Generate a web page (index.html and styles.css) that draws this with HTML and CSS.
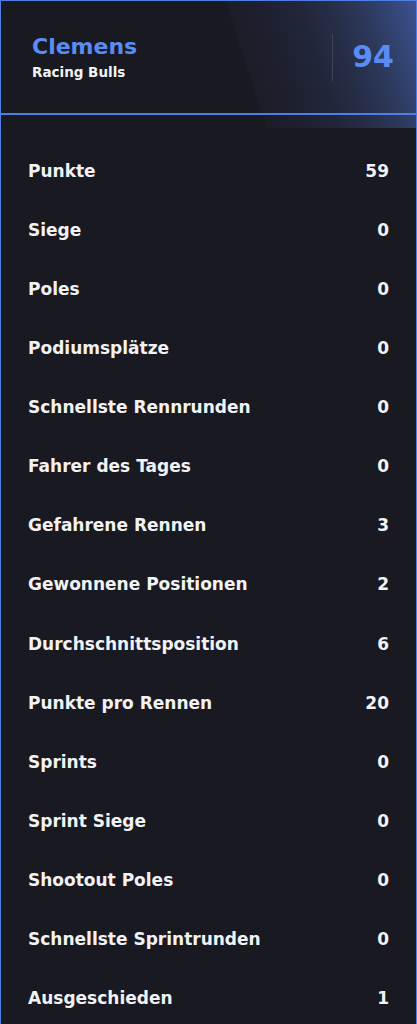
FILE: index.html
```html
<!DOCTYPE html>
<html lang="de">
<head>
<meta charset="utf-8">
<title>Clemens – Racing Bulls</title>
<link rel="stylesheet" href="styles.css">
</head>
<body>
<div class="card">
  <div class="glow"></div>
  <header class="head">
    <div class="who">
      <div class="name">Clemens</div>
      <div class="team">Racing Bulls</div>
    </div>
    <div class="divider"></div>
    <div class="score">94</div>
  </header>
  <ul class="stats">
    <li class="row"><span>Punkte</span><span>59</span></li>
    <li class="row"><span>Siege</span><span>0</span></li>
    <li class="row"><span>Poles</span><span>0</span></li>
    <li class="row"><span>Podiumsplätze</span><span>0</span></li>
    <li class="row"><span>Schnellste Rennrunden</span><span>0</span></li>
    <li class="row"><span>Fahrer des Tages</span><span>0</span></li>
    <li class="row"><span>Gefahrene Rennen</span><span>3</span></li>
    <li class="row"><span>Gewonnene Positionen</span><span>2</span></li>
    <li class="row"><span>Durchschnittsposition</span><span>6</span></li>
    <li class="row"><span>Punkte pro Rennen</span><span>20</span></li>
    <li class="row"><span>Sprints</span><span>0</span></li>
    <li class="row"><span>Sprint Siege</span><span>0</span></li>
    <li class="row"><span>Shootout Poles</span><span>0</span></li>
    <li class="row"><span>Schnellste Sprintrunden</span><span>0</span></li>
    <li class="row"><span>Ausgeschieden</span><span>1</span></li>
  </ul>
</div>
</body>
</html>
```
FILE: styles.css
```css
html, body {
  margin: 0;
  padding: 0;
  background: #191921;
}
body {
  font-family: "DejaVu Sans", "Liberation Sans", sans-serif;
  font-weight: bold;
  color: #f2f2f4;
}
.card {
  position: relative;
  width: 417px;
  box-sizing: border-box;
  border: 1px solid #4f7fe6;
  border-bottom: none;
  background: #191921;
  min-height: 1024px;
}
.glow {
  position: absolute;
  top: 0;
  left: 0;
  right: 0;
  height: 127px;
  background: linear-gradient(72deg,
    #191921 0%,
    #191921 58%,
    #1c1d27 58.6%,
    #1e2030 66%,
    #21263a 74%,
    #262e48 81%,
    #2d395c 88%,
    #344575 94%,
    #3c5290 100%);
}
.head {
  position: relative;
  z-index: 1;
  height: 112px;
  display: flex;
  align-items: center;
  padding: 0 22px 0 31px;
  border-bottom: 2px solid #4f7fe6;
}
.who {
  display: flex;
  flex-direction: column;
}
.name {
  font-size: 22px;
  line-height: 24px;
  color: #5b8cf2;
}
.team {
  margin-top: 5px;
  font-size: 13.5px;
  line-height: 16px;
  color: #f2f2f4;
}
.divider {
  margin-left: auto;
  width: 1px;
  height: 47px;
  background: #3d4358;
}
.score {
  margin-left: 19px;
  font-size: 30px;
  line-height: 34px;
  color: #5b8cf2;
}
.stats {
  position: relative;
  z-index: 1;
  list-style: none;
  margin: 0;
  padding: 26px 0 0;
}
.row {
  height: 59.14px;
  display: flex;
  align-items: center;
  justify-content: space-between;
  padding: 0 27px;
  font-size: 17px;
}
```
